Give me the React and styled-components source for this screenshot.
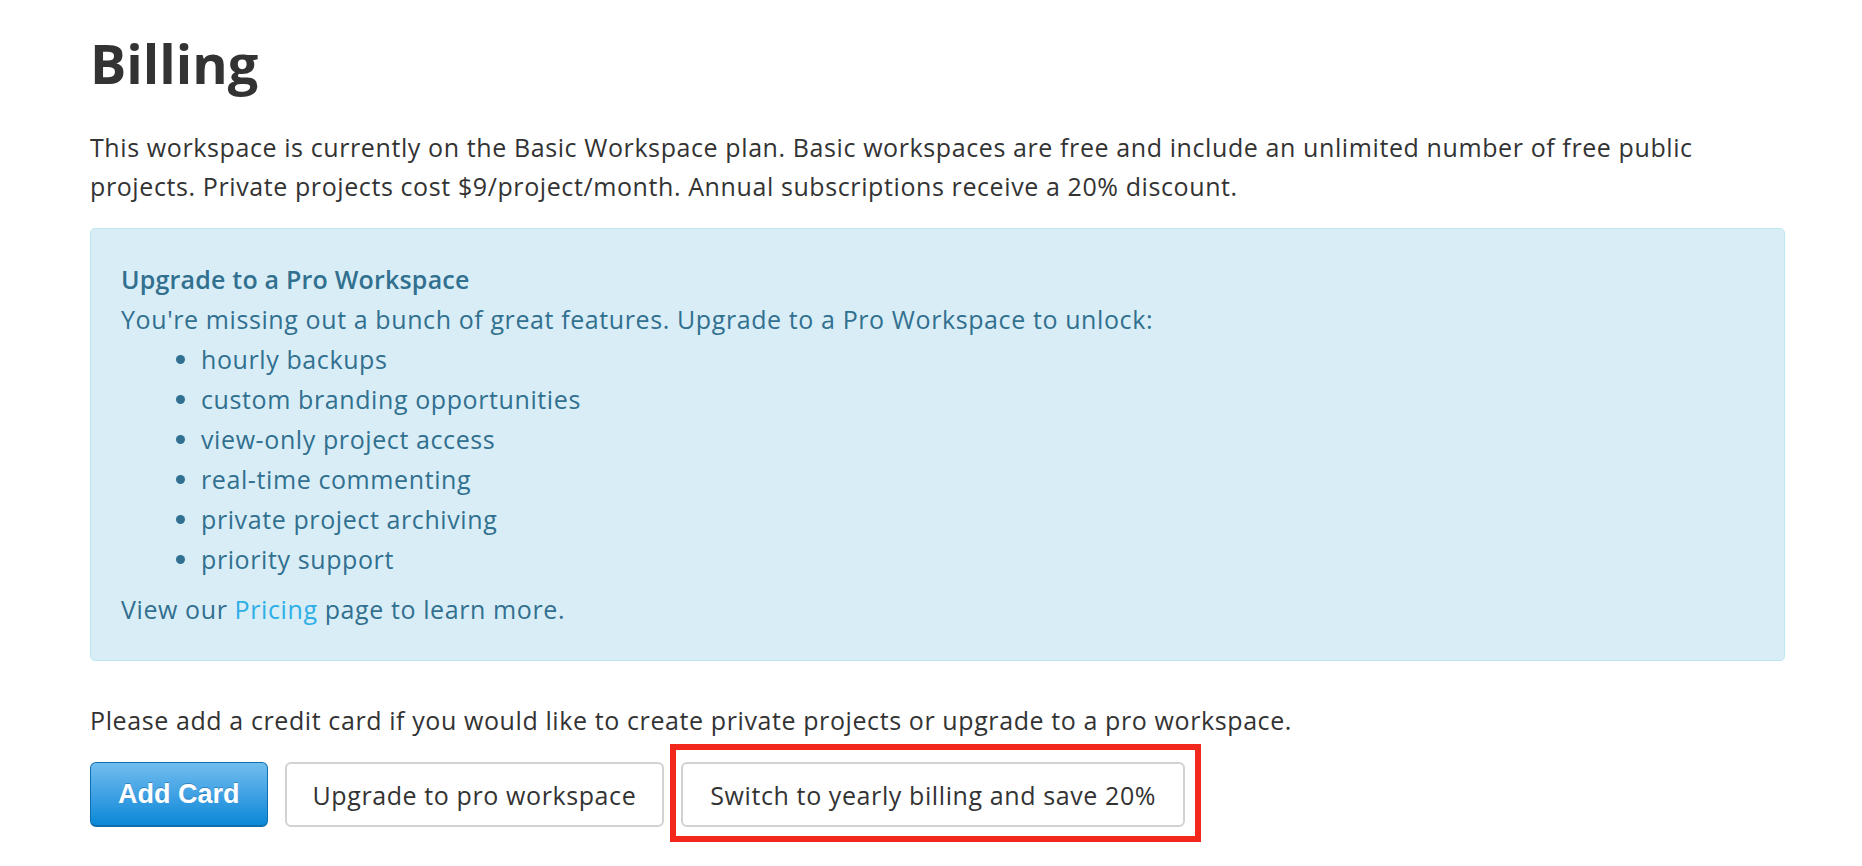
import React from "react";
import styled, { createGlobalStyle } from "styled-components";

const GlobalStyle = createGlobalStyle`
  body {
    margin: 0;
    background: #fff;
    font-family: "Open Sans", Lato, sans-serif;
    color: #333;
  }
`;

const features = [
  "hourly backups",
  "custom branding opportunities",
  "view-only project access",
  "real-time commenting",
  "private project archiving",
  "priority support",
];

export default function App() {
  return (
    <>
      <GlobalStyle />
      <Page>
        <Title>Billing</Title>
        <Text>
          This workspace is currently on the Basic Workspace plan. Basic
          workspaces are free and include an unlimited number of free public
          projects. Private projects cost $9/project/month. Annual
          subscriptions receive a 20% discount.
        </Text>

        <InfoBox>
          <InfoTitle>Upgrade to a Pro Workspace</InfoTitle>
          <InfoText>
            You're missing out a bunch of great features. Upgrade to a Pro
            Workspace to unlock:
          </InfoText>
          <FeatureList>
            {features.map((f) => (
              <li key={f}>{f}</li>
            ))}
          </FeatureList>
          <InfoText>
            View our <Link href="#">Pricing</Link> page to learn more.
          </InfoText>
        </InfoBox>

        <CardText>
          Please add a credit card if you would like to create private
          projects or upgrade to a pro workspace.
        </CardText>

        <ButtonRow>
          <PrimaryButton>Add Card</PrimaryButton>
          <Button>Upgrade to pro workspace</Button>
          <Highlight>
            <Button $wide>Switch to yearly billing and save 20%</Button>
          </Highlight>
        </ButtonRow>
      </Page>
    </>
  );
}

const Page = styled.div`
  padding: 28px 77px 40px 90px;
`;

const Title = styled.h1`
  margin: 0 0 30px;
  font-size: 54px;
  line-height: 70px;
  font-weight: 700;
  color: #333;
`;

const Text = styled.p`
  margin: 0 0 22px;
  font-size: 25px;
  line-height: 39px;
  letter-spacing: 0.6px;
`;

const InfoBox = styled.div`
  background: #d9edf7;
  border: 1px solid #bce8f1;
  border-radius: 5px;
  padding: 30px 30px 31px;
  color: #31708f;
  font-size: 25px;
  line-height: 40px;
  letter-spacing: 0.6px;
`;

const InfoTitle = styled.div`
  font-weight: 600;
  letter-spacing: 0.2px;
`;

const InfoText = styled.div``;

const FeatureList = styled.ul`
  margin: 0 0 10px;
  padding-left: 80px;
`;

const Link = styled.a`
  color: #2dafe6;
  text-decoration: none;
`;

const CardText = styled(Text)`
  margin: 39px 0 22px;
  line-height: 40px;
`;

const ButtonRow = styled.div`
  display: flex;
  align-items: center;
  gap: 17px;
`;

const Button = styled.button`
  height: 65px;
  padding: 0 ${(p) => (p.$wide ? "27px" : "26px")};
  background: #fff;
  border: 2px solid #d2d2d2;
  border-radius: 6px;
  font-family: "Open Sans", Lato, sans-serif;
  font-size: 25px;
  letter-spacing: 0.6px;
  color: #333;
  cursor: pointer;
`;

const PrimaryButton = styled(Button)`
  padding: 0 27px;
  border: 1px solid #0f6fae;
  border-bottom-width: 2px;
  background: linear-gradient(#71bdee, #3c9fe3 55%, #0a88d5);
  font-family: "Liberation Sans", Arial, sans-serif;
  font-weight: 700;
  font-size: 27px;
  letter-spacing: 0;
  color: #fff;
  text-shadow: 0 -1px 0 rgba(0, 60, 110, 0.35);
`;

const Highlight = styled.span`
  position: relative;
  display: inline-flex;

  &::after {
    content: "";
    position: absolute;
    top: -18px;
    right: -16px;
    bottom: -15px;
    left: -11px;
    border: 6px solid #f3281c;
    pointer-events: none;
  }
`;
